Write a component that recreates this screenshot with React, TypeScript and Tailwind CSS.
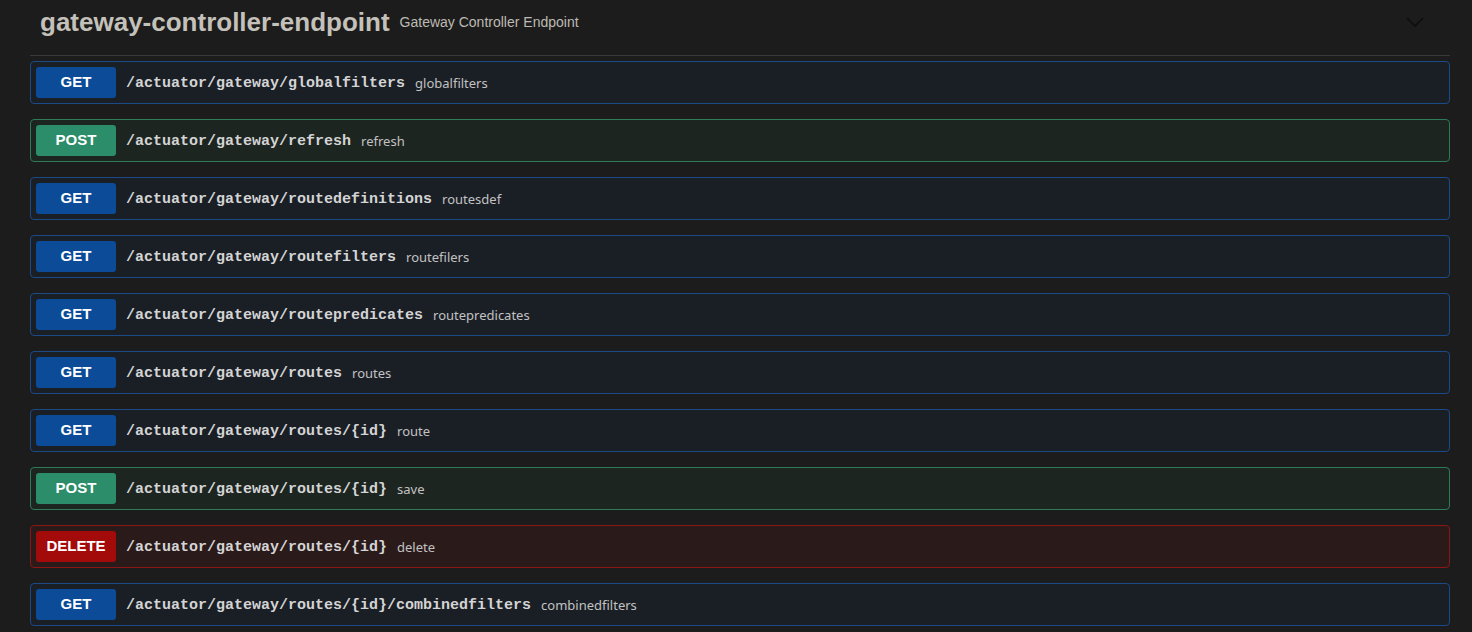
type Method = 'GET' | 'POST' | 'DELETE';

interface Op {
  method: Method;
  path: string;
  summary: string;
}

const ops: Op[] = [
  { method: 'GET', path: '/actuator/gateway/globalfilters', summary: 'globalfilters' },
  { method: 'POST', path: '/actuator/gateway/refresh', summary: 'refresh' },
  { method: 'GET', path: '/actuator/gateway/routedefinitions', summary: 'routesdef' },
  { method: 'GET', path: '/actuator/gateway/routefilters', summary: 'routefilers' },
  { method: 'GET', path: '/actuator/gateway/routepredicates', summary: 'routepredicates' },
  { method: 'GET', path: '/actuator/gateway/routes', summary: 'routes' },
  { method: 'GET', path: '/actuator/gateway/routes/{id}', summary: 'route' },
  { method: 'POST', path: '/actuator/gateway/routes/{id}', summary: 'save' },
  { method: 'DELETE', path: '/actuator/gateway/routes/{id}', summary: 'delete' },
  { method: 'GET', path: '/actuator/gateway/routes/{id}/combinedfilters', summary: 'combinedfilters' },
];

// swagger dark theme colours per method
const styles: Record<Method, { row: string; badge: string }> = {
  GET: { row: 'bg-[#1a1f26] border-[#1c4a86]', badge: 'bg-[#0b4b97]' },
  POST: { row: 'bg-[#1d2521] border-[#2f7a59]', badge: 'bg-[#2b8d69]' },
  DELETE: { row: 'bg-[#2a1a1a] border-[#8a1616]', badge: 'bg-[#a30b0b]' },
};

function OpRow({ op }: { op: Op }) {
  const s = styles[op.method];
  return (
    <div className={`flex items-center h-[43px] border rounded-[4px] px-[5px] ${s.row}`}>
      <span
        className={`w-[80px] h-[31px] flex items-center justify-center rounded-[3px] text-white text-[15px] font-bold ${s.badge}`}
        style={{ fontFamily: '"Liberation Sans", Arial, sans-serif' }}
      >
        {op.method}
      </span>
      <span
        className="ml-[10px] mt-[3px] text-[15px] leading-[20px] font-bold text-[#d4d4d4]"
        style={{ fontFamily: '"Liberation Mono", "Courier New", monospace' }}
      >
        {op.path}
      </span>
      <span
        className="ml-[10px] text-[13px] leading-[20px] text-[#c2c2c2]"
        style={{ fontFamily: '"Noto Sans", "Liberation Sans", sans-serif' }}
      >
        {op.summary}
      </span>
    </div>
  );
}

export default function App() {
  return (
    <div className="w-[1472px] h-[632px] overflow-hidden bg-[#1c1c1c]">
      <div className="ml-[30px] w-[1420px]">
        {/* Tag header */}
        <div className="flex items-center h-[56px] border-b border-[#3a3a3a] pb-[12px] pl-[10px] pr-[26px]">
          <h3
            className="text-[26px] font-bold text-[#c4c1ba] leading-none"
            style={{ fontFamily: '"Liberation Sans", Arial, sans-serif' }}
          >
            gateway-controller-endpoint
          </h3>
          <span
            className="ml-[10px] mt-[2px] text-[14px] text-[#bdbab3]"
            style={{ fontFamily: '"Liberation Sans", Arial, sans-serif' }}
          >
            Gateway Controller Endpoint
          </span>
          <svg className="ml-auto mt-[2px]" width="18" height="11" viewBox="0 0 18 11" fill="none">
            <path d="M1 1l8 8 8-8" stroke="#0e0e0e" strokeWidth="1.6" />
          </svg>
        </div>

        {/* Operations */}
        <div className="flex flex-col gap-[15px] pt-[5px]">
          {ops.map((op, i) => (
            <OpRow key={i} op={op} />
          ))}
        </div>
      </div>
    </div>
  );
}
